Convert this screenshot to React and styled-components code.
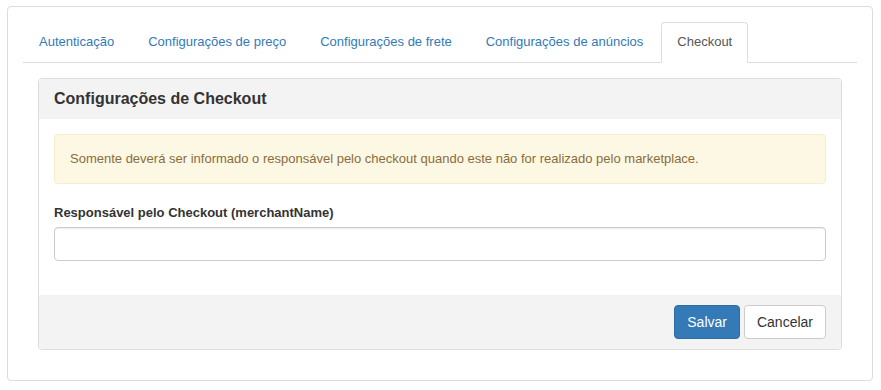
import React from 'react'
import styled, { createGlobalStyle } from 'styled-components'

const GlobalStyle = createGlobalStyle`
    body {
        margin: 0;
        background: #fff;
        font-family: "Liberation Sans", Arial, sans-serif;
        font-size: 13px;
        line-height: 1.42857;
        color: #333;
    }
    * { box-sizing: border-box; }
`

const Frame = styled.div`
    margin: 6px 8px 0 7px;
    height: 375px;
    border: 1px solid #ddd;
    border-radius: 4px;
    padding: 15px 15px 0 15px;
`

const TabBar = styled.ul`
    display: flex;
    list-style: none;
    margin: 0;
    padding: 0;
    border-bottom: 1px solid #ddd;
`

const Tab = styled.li`
    margin-right: 2px;
    margin-bottom: -1px;
    padding: 10px 15px;
    line-height: 18.57px;
    border: 1px solid ${p => (p.$active ? '#ddd' : 'transparent')};
    border-bottom-color: transparent;
    border-radius: 4px 4px 0 0;
    background: ${p => (p.$active ? '#fff' : 'transparent')};
    color: ${p => (p.$active ? '#555' : '#337ab7')};
    cursor: pointer;
`

const TabContent = styled.div`
    padding: 15px 15px 0;
`

const Panel = styled.div`
    border: 1px solid #ddd;
    border-radius: 4px;
    overflow: hidden;
`

const PanelHeading = styled.div`
    background: #f3f3f3;
    padding: 10px 15px;
    height: 40px;
    font-size: 16px;
    line-height: 20px;
    font-weight: bold;
    color: #333;
`

const PanelBody = styled.div`
    padding: 15px 15px 19px;
`

const Alert = styled.div`
    background: #fcf8e3;
    border: 1px solid #faebcc;
    color: #8a6d3b;
    border-radius: 4px;
    padding: 15px;
    line-height: 18px;
    margin-bottom: 20px;
`

const Field = styled.div`
    margin-bottom: 15px;
`

const Label = styled.label`
    display: block;
    font-weight: bold;
    line-height: 18.57px;
    margin-bottom: 5px;
`

const Input = styled.input`
    display: block;
    width: 100%;
    height: 34px;
    padding: 6px 12px;
    border: 1px solid #ccc;
    border-radius: 4px;
    box-shadow: inset 0 1px 1px rgba(0, 0, 0, 0.075);
    font: inherit;
    font-size: 14px;
`

const PanelFooter = styled.div`
    background: #f3f3f3;
    padding: 10px 15px;
    display: flex;
    justify-content: flex-end;
    gap: 4px;
`

const Button = styled.button`
    height: 34px;
    padding: 6px 12px;
    font-family: "Liberation Sans", Arial, sans-serif;
    font-size: 14px;
    line-height: 20px;
    border-radius: 4px;
    border: 1px solid ${p => (p.$primary ? '#2e6da4' : '#ccc')};
    background: ${p => (p.$primary ? '#337ab7' : '#fff')};
    color: ${p => (p.$primary ? '#fff' : '#333')};
    cursor: pointer;
`

const tabs = [
    'Autenticação',
    'Configurações de preço',
    'Configurações de frete',
    'Configurações de anúncios',
    'Checkout',
]

const App = () => {
    return (
        <>
            <GlobalStyle />
            <Frame>
                <TabBar>
                    {tabs.map(t => (
                        <Tab key={t} $active={t === 'Checkout'}>{t}</Tab>
                    ))}
                </TabBar>
                <TabContent>
                    <Panel>
                        <PanelHeading>Configurações de Checkout</PanelHeading>
                        <PanelBody>
                            <Alert>
                                Somente deverá ser informado o responsável pelo checkout quando este não for realizado pelo marketplace.
                            </Alert>
                            <Field>
                                <Label htmlFor="merchantName">Responsável pelo Checkout (merchantName)</Label>
                                <Input id="merchantName" type="text" />
                            </Field>
                        </PanelBody>
                        <PanelFooter>
                            <Button $primary>Salvar</Button>
                            <Button>Cancelar</Button>
                        </PanelFooter>
                    </Panel>
                </TabContent>
            </Frame>
        </>
    )
}

export default App
